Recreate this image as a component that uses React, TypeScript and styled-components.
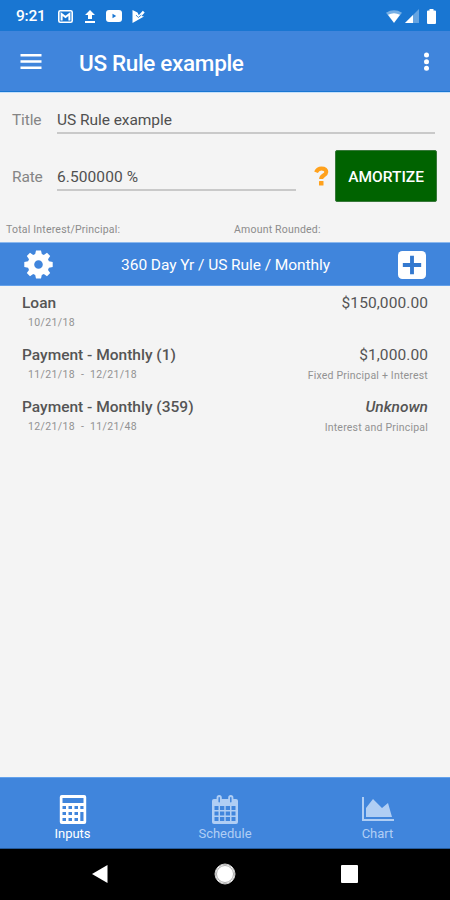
import React from "react";
import styled, { createGlobalStyle } from "styled-components";

const Global = createGlobalStyle`
  * { box-sizing: border-box; }
  body { margin: 0; background: #f4f4f4; font-family: Roboto, sans-serif; color: #4d4d4d; }
`;
const Screen = styled.div`
  width: 450px; height: 900px; display: flex; flex-direction: column; background: #f4f4f4; overflow: hidden;
`;
const StatusBar = styled.div`
  height: 31px; flex: none; background: #1976d2; display: flex; align-items: center; padding: 1px 14px 0 16px; color: #fff;
`;
const Clock = styled.span`
  width: 42px; font-size: 15.5px; font-weight: 500; line-height: 18px; letter-spacing: -0.2px; white-space: nowrap;
`;
const Notifications = styled.div`
  display: flex; align-items: center; flex: 1;
`;
const Icon = styled.svg<{ $gap?: number }>`
  display: block; flex: none; margin-right: ${(p) => p.$gap ?? 0}px;
`;
const AppBar = styled.header`
  height: 61px; flex: none; background: #4085dc; border-bottom: 1px solid #1976d2;
  display: flex; align-items: center; padding: 0 21px 0 20px; color: #fff;
`;
const AppTitle = styled.h1`
  margin: 0 0 0 37px; flex: 1; font-size: 22.5px; font-weight: 500; line-height: 30px; white-space: nowrap;
  letter-spacing: -0.33px; padding-top: 3px;
`;
const Form = styled.section`
  height: 150px; flex: none; display: flex; flex-direction: column; border-top: 1px solid #c5e0fb;
`;
const FieldRow = styled.div<{ $height: number; $pad: number }>`
  height: ${(p) => p.$height}px; flex: none; display: flex; padding: ${(p) => p.$pad}px 13px 0 12px;
`;
const Label = styled.label`
  width: 45px; font-size: 15.5px; line-height: 20px; color: #858585; letter-spacing: -0.15px;
`;
const Field = styled.div<{ $width: number; $spacing: number }>`
  width: ${(p) => p.$width}px; height: 24px; border-bottom: 2px solid #c9c9c9; font-size: 15.5px; line-height: 20px;
  color: #505050; letter-spacing: ${(p) => p.$spacing}px; white-space: nowrap;
`;
const Help = styled.span`
  display: flex; margin: -1px 6px 0 18px;
`;
const Amortize = styled.button`
  width: 102px; height: 52px; margin: -17px 0 0; padding: 2px 0 0; border: 1px solid #38783a; border-radius: 2px; background: #006300;
  color: #fff; font: 500 15.5px/20px Roboto, sans-serif;
`;
const Totals = styled.div`
  height: 20px; display: grid; grid-template-columns: 228px 1fr; padding: 0 6px; color: #8c8c8c; font-size: 10.5px;
  line-height: 14px; letter-spacing: 0.2px;
`;
const SettingsBar = styled.section`
  height: 44px; flex: none; background: #4085dc; display: flex; align-items: center; justify-content: space-between;
  padding: 1px 24px 0; color: #fff; border-top: 1px solid #8bb8ee; border-bottom: 1px solid #64a1ea;
`;
const SettingsText = styled.span`
  font-size: 15.5px; line-height: 20px; white-space: nowrap; letter-spacing: -0.07px;
`;
const Events = styled.main`
  flex: 1; padding: 7px 22px 0;
`;
const EventRow = styled.div`
  height: 52px; display: flex; justify-content: space-between;
`;
const Column = styled.div<{ $right?: boolean }>`
  display: flex; flex-direction: column; align-items: ${(p) => (p.$right ? "flex-end" : "flex-start")};
`;
const Main = styled.span<{ $strong?: boolean; $italic?: boolean; $spacing?: number }>`
  font-size: 15.5px; line-height: 20px; font-weight: ${(p) => (p.$strong ? 500 : 400)};
  font-style: ${(p) => (p.$italic ? "italic" : "normal")}; color: #555; letter-spacing: ${(p) => p.$spacing ?? 0}px; white-space: nowrap;
`;
const Sub = styled.span<{ $date?: boolean }>`
  font-size: 10.5px; line-height: 14px; margin-top: ${(p) => (p.$date ? 3 : 4)}px; padding-left: ${(p) => (p.$date ? 6 : 0)}px;
  color: #929292; letter-spacing: ${(p) => (p.$date ? 0.36 : 0.2)}px; white-space: pre;
`;
const Tabs = styled.nav`
  height: 72px; flex: none; background: #4085dc; border-top: 1px solid #63a2ec; border-bottom: 1px solid #245a9c;
  display: grid; grid-template-columns: 145px 160px 145px; padding-top: 17px;
`;
const Tab = styled.div<{ $active?: boolean }>`
  display: flex; flex-direction: column; align-items: center; color: ${(p) => (p.$active ? "#fff" : "#b0cef4")};
  font-size: 13px; line-height: 16px; gap: 2px;
`;
const SystemNav = styled.div`
  height: 51px; flex: none; background: #000; display: flex; align-items: center; justify-content: space-between; padding: 0 92px 2px 91px;
`;

const events = [
  { name: "Loan", dates: "10/21/18", amount: "$150,000.00", note: "" },
  { name: "Payment - Monthly (1)", dates: "11/21/18  -  12/21/18", amount: "$1,000.00", note: "Fixed Principal + Interest" },
  { name: "Payment - Monthly (359)", dates: "12/21/18  -  11/21/48", amount: "Unknown", note: "Interest and Principal", unknown: true },
];

const Gear = () => (
  <Icon width="29" height="29" viewBox="0 0 29 29" fill="#fff">
    <path fillRule="evenodd" d="M12 0.5h5l.8 3.6 2 .9 3.2-2.2 3.2 3.2-2.2 3.2.9 2.1 3.8.7v5l-3.8.8-.9 2.1 2.2 3.2-3.2 3.2-3.2-2.2-2 .9-.8 3.6h-5l-.8-3.6-2-.9L6 26.300l-3.200-3.200 2.200-3.200-.9-2.100-3.800-.8v-5l3.800-.7.9-2.100-2.200-3.200L6 2.800 9.200 5l2-.9zM14.500 10.200a4.300 4.300 0 1 0 0 8.600 4.300 4.300 0 0 0 0-8.600z" />
  </Icon>
);

export default function App() {
  return (
    <Screen>
      <Global />
      <StatusBar>
        <Clock>9:21</Clock>
        <Notifications>
          <Icon $gap={11} width="15" height="13" viewBox="0 0 15 13">
            <rect x=".8" y=".8" width="13.4" height="11.4" rx="1.5" fill="none" stroke="#fff" strokeWidth="1.6" />
            <path d="M3.600 10.500V4l3.900 3 3.900-3v6.500" fill="none" stroke="#fff" strokeWidth="2" />
          </Icon>
          <Icon $gap={10} width="12" height="13" viewBox="0 0 12 13" fill="#fff"><path d="M6 0l5 5H8v4H4V5H1zM1 11h10v2H1z" /></Icon>
          <Icon $gap={10} width="16" height="12" viewBox="0 0 16 12"><rect width="16" height="12" rx="3" fill="#fff" /><path d="M6.5 3.8v4.4L10.2 6z" fill="#1976d2" /></Icon>
          <Icon width="13" height="13" viewBox="0 0 13 13" fill="#fff"><path d="M.5 0 5.500 2.500 6.800 5.200 10.800.8l1.900 1.800L9.500 6l2.500.4L.5 13z" /><path d="M4 5l2.300 2.500L9.300 5" fill="none" stroke="#1976d2" strokeWidth=".8" /></Icon>
        </Notifications>
        <Icon $gap={3} width="16" height="13" viewBox="0 0 16 13"><path d="M0 2.7Q8-2 16 2.7L8 13z" fill="#76afe5" /><path d="M2 4.7Q8 1.6 14 4.7L8 12.800z" fill="#fff" /></Icon>
        <Icon $gap={8} width="14" height="14" viewBox="0 0 14 14"><path d="M14 0v14H0z" fill="#66a4e1" /><path d="M8 6v8H0z" fill="#fff" /></Icon>
        <Icon width="9" height="15" viewBox="0 0 9 15" fill="#fff"><path d="M2.5 0h4v1.500H8q1 0 1 1V14q0 1-1 1H1q-1 0-1-1V2.500q0-1 1-1h1.500z" /></Icon>
      </StatusBar>
      <AppBar>
        <Icon width="22" height="17" viewBox="0 0 22 17" fill="#fff"><path d="M.5 1h21v2.500H.5zM.5 7.200h21v2.500H.5zM.5 13.400h21v2.500H.5z" /></Icon>
        <AppTitle>US Rule example</AppTitle>
        <Icon width="5" height="19" viewBox="0 0 5 19" fill="#fff"><circle cx="2.5" cy="3" r="2.500" /><circle cx="2.5" cy="9.700" r="2.500" /><circle cx="2.5" cy="16.300" r="2.500" /></Icon>
      </AppBar>
      <Form>
        <FieldRow $height={56} $pad={17}>
          <Label>Title</Label>
          <Field $width={378} $spacing={-0.05}>US Rule example</Field>
        </FieldRow>
        <FieldRow $height={74} $pad={18}>
          <Label>Rate</Label>
          <Field $width={240} $spacing={0.1}>6.500000 %</Field>
          <Help>
            <Icon width="15" height="20" viewBox="0 0 15 20"><path d="M2 6.300C3.300 3.400 5 2.400 7.300 2.400c3 0 5 1.300 5 3.600 0 3.300-5.200 3.200-5.200 7" fill="none" stroke="#ffa11c" strokeWidth="4" /><rect x="5" y="15" width="4.500" height="4.500" rx=".5" fill="#ffa11c" /></Icon>
          </Help>
          <Amortize>AMORTIZE</Amortize>
        </FieldRow>
        <Totals><span>Total Interest/Principal:</span><span>Amount Rounded:</span></Totals>
      </Form>
      <SettingsBar>
        <Gear />
        <SettingsText>360 Day Yr / US Rule / Monthly</SettingsText>
        <Icon width="28" height="28" viewBox="0 0 29 29"><rect width="29" height="29" rx="4.5" fill="#fff" /><path d="M14.500 5v19M5 14.500h19" stroke="#3479cf" strokeWidth="4" /></Icon>
      </SettingsBar>
      <Events>
        {events.map((e) => (
          <EventRow key={e.name}>
            <Column><Main $strong>{e.name}</Main><Sub $date>{e.dates}</Sub></Column>
            <Column $right><Main $strong={e.unknown} $italic={e.unknown} $spacing={e.unknown ? 0 : 0.08}>{e.amount}</Main><Sub>{e.note}</Sub></Column>
          </EventRow>
        ))}
      </Events>
      <Tabs>
        <Tab $active>
          <Icon width="28" height="29" viewBox="0 0 28 29"><rect x=".8" width="26.400" height="29" rx="2" fill="currentColor" />
            <path fill="#4085dc" d="M3.500 3h21v5h-21zM3.500 11H7v3H3.500zm6 0H13v3H9.500zm6 0H19v3h-3.500zm5.800 0h3.200v3h-3.200zM3.500 17H7v3H3.500zm6 0H13v3H9.500zm6 0H19v3h-3.500zm5.800 0h3.200v9h-3.200zM3.500 23H7v3H3.500zm6 0H13v3H9.500zm6 0H19v3h-3.500z" /></Icon>
          <span>Inputs</span>
        </Tab>
        <Tab>
          <Icon width="28" height="29" viewBox="0 0 28 29"><rect x="1" y="4" width="26" height="25" rx="2" fill="currentColor" /><path d="M8.200 2.700v4M19.800 2.700v4" stroke="currentColor" strokeWidth="5.200" strokeLinecap="round" /><path d="M8.200 2.700v4M19.800 2.700v4" stroke="#4085dc" strokeWidth="1.500" strokeLinecap="round" />
            <path fill="#4085dc" d="M3.500 11h4v4h-4zm5.500 0h4.300v4H9zm5.700 0H19v4h-4.300zm5.800 0h4v4h-4zM3.500 16.500h4v4h-4zm5.500 0h4.300v4H9zm5.700 0H19v4h-4.300zm5.800 0h4v4h-4zM3.500 22h4v4h-4zm5.500 0h4.300v4H9zm5.700 0H19v4h-4.300zm5.800 0h4v4h-4z" /></Icon>
          <span>Schedule</span>
        </Tab>
        <Tab>
          <Icon width="32" height="29" viewBox="0 0 2048 1856" fill="currentColor"><path d="M2048 1536v128H0V128h128v1408h1920zM1664 512l256 896H256V832l448-576 576 576z" /></Icon>
          <span>Chart</span>
        </Tab>
      </Tabs>
      <SystemNav>
        <Icon width="17" height="20" viewBox="0 0 17 20" fill="#fff"><path d="M16.500 1v18L1 10z" /></Icon>
        <Icon width="22" height="22" viewBox="0 0 22 22"><circle cx="11" cy="11" r="9.800" fill="#fff" /><circle cx="11" cy="11" r="10" fill="none" stroke="#ccc" /><circle cx="11" cy="11" r="8.500" fill="none" stroke="#888" strokeWidth=".7" /></Icon>
        <Icon width="17" height="18" viewBox="0 0 17 18"><rect width="17" height="18" rx="1" fill="#fff" /></Icon>
      </SystemNav>
    </Screen>
  );
}
